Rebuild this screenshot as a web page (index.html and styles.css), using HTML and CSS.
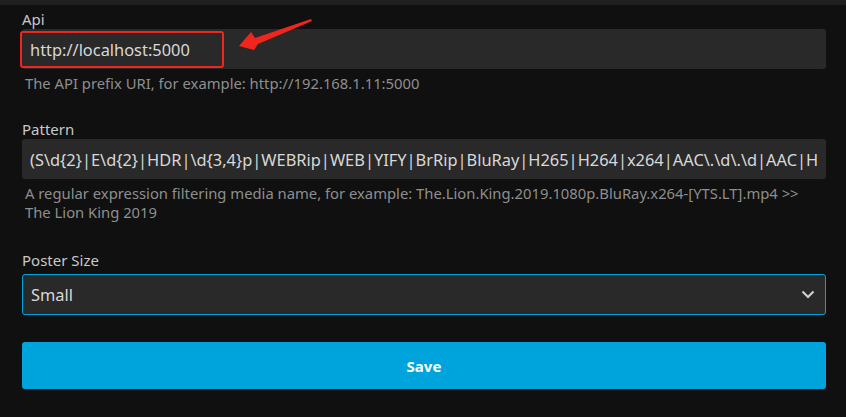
FILE: index.html
```html
<!DOCTYPE html>
<html>
<head>
<meta charset="utf-8">
<link rel="stylesheet" href="styles.css">
</head>
<body>
<div class="topbar"></div>
<form class="form">
  <div class="field">
    <label class="label">Api</label>
    <div class="input-wrap">
      <div class="input">http://localhost:5000</div>
      <div class="highlight"></div>
      <svg class="arrow" width="80" height="40" viewBox="0 0 80 40"><polygon points="2,27 14,13 18,19 74,0 75,2 21,25 17,31" fill="#f0251e"/></svg>
    </div>
    <div class="help">The API prefix URI, for example: http://192.168.1.11:5000</div>
  </div>
  <div class="field pattern">
    <label class="label">Pattern</label>
    <div class="input"><span class="clip">(S\d{2}|E\d{2}|HDR|\d{3,4}p|WEBRip|WEB|YIFY|BrRip|BluRay|H265|H264|x264|AAC\.\d\.\d|AAC|HDTV|DVDRip)</span></div>
    <div class="help">A regular expression filtering media name, for example: The.Lion.King.2019.1080p.BluRay.x264-[YTS.LT].mp4 &gt;&gt; The Lion King 2019</div>
  </div>
  <div class="field last">
    <label class="label">Poster Size</label>
    <div class="input select">
      <span>Small</span>
      <svg class="chev" width="14" height="9" viewBox="0 0 14 9"><polyline points="1.5,1.5 7,7 12.5,1.5" fill="none" stroke="#cfcfcf" stroke-width="2.2"/></svg>
    </div>
  </div>
  <button type="button" class="save">Save</button>
</form>
</body>
</html>
```
FILE: styles.css
```css
html, body {
  margin: 0;
  padding: 0;
  background: #101010;
  font-family: "Noto Sans", "Open Sans", sans-serif;
  color: #ccc;
  overflow: hidden;
}
.topbar {
  height: 5px;
  background: #202020;
}
.form {
  display: flex;
  flex-direction: column;
  padding: 5px 20px 0 22px;
}
.field {
  display: flex;
  flex-direction: column;
  margin-bottom: 27px;
}
.field.pattern {
  margin-bottom: 29px;
}
.field.last {
  margin-bottom: 27px;
}
.label {
  display: block;
  font-size: 15px;
  line-height: 19px;
  color: #c8c8c8;
}
.input-wrap {
  position: relative;
}
.input {
  height: 40px;
  box-sizing: border-box;
  background: #292929;
  border-radius: 3px;
  padding: 0 8px;
  display: flex;
  align-items: center;
  font-size: 16.4px;
  color: #d8d8d8;
  overflow: hidden;
  white-space: nowrap;
}
.clip {
  overflow: hidden;
  display: block;
  width: 100%;
}
.highlight {
  position: absolute;
  left: -2px;
  top: 2px;
  width: 200px;
  height: 33px;
  border: 2px solid #f0251e;
  border-radius: 3px;
}
.arrow {
  position: absolute;
  left: 215px;
  top: -10px;
}
.help {
  margin-top: 5px;
  font-size: 14.8px;
  line-height: 19px;
  color: #8e8e8e;
  padding-left: 3px;
}
.select {
  margin-top: 4px;
  border: 1px solid #00a4dc;
  height: 41px;
  justify-content: space-between;
  padding-right: 10px;
}
.save {
  height: 47px;
  background: #00a4dc;
  border: none;
  border-radius: 3px;
  color: #fff;
  font-family: "Noto Sans", "Open Sans", sans-serif;
  font-weight: bold;
  font-size: 15px;
}
```
